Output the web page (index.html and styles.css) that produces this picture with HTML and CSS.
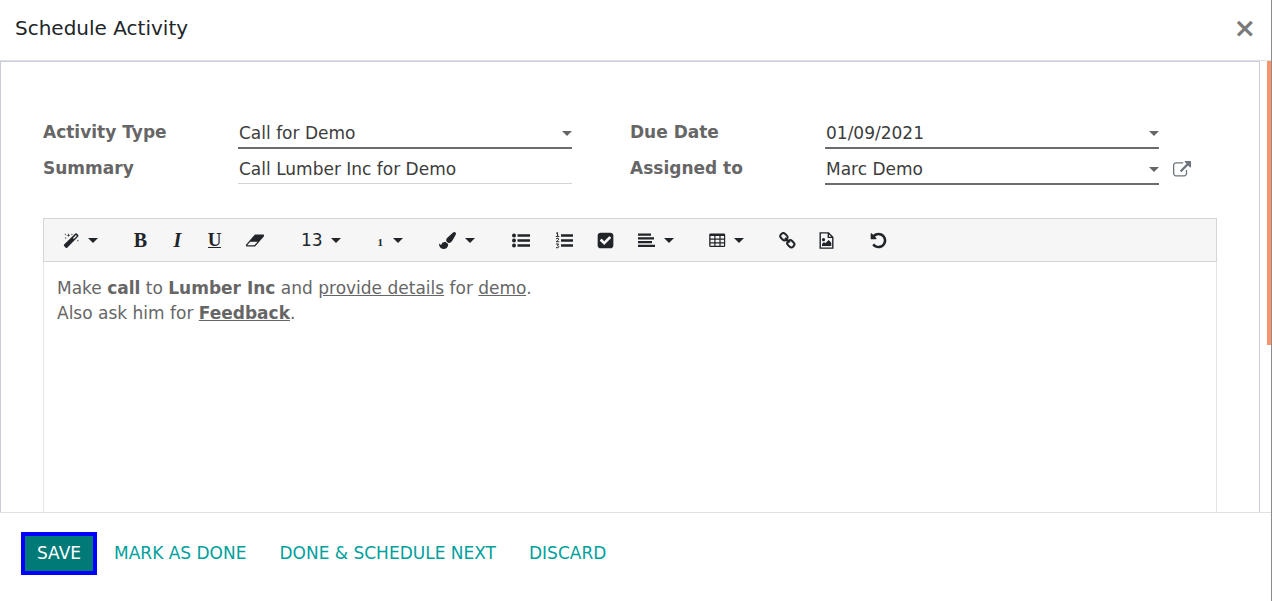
FILE: index.html
```html
<!DOCTYPE html>
<html lang="en">
<head>
<meta charset="utf-8">
<title>Schedule Activity</title>
<link rel="stylesheet" href="styles.css">
</head>
<body>
<svg class="defs" aria-hidden="true">
  <symbol id="caret" viewBox="0 0 10 5"><path d="M0 0h10L5 5z"/></symbol>
</svg>
<div class="dialog" role="dialog" aria-labelledby="title">
  <header class="header">
    <h1 class="title" id="title">Schedule Activity</h1>
    <button class="close" type="button" aria-label="Close">×</button>
  </header>
  <main class="body">
    <div class="sheet">
      <form class="fields">
        <label class="label" for="type">Activity Type</label>
        <div class="field">
          <select class="control strong" id="type"><option>Call for Demo</option></select>
          <svg class="caret field-caret"><use href="#caret"/></svg>
        </div>
        <label class="label" for="due">Due Date</label>
        <div class="field">
          <input class="control strong" id="due" type="text" value="01/09/2021">
          <svg class="caret field-caret"><use href="#caret"/></svg>
        </div>
        <label class="label" for="summary">Summary</label>
        <div class="field">
          <input class="control" id="summary" type="text" value="Call Lumber Inc for Demo">
        </div>
        <label class="label" for="assigned">Assigned to</label>
        <div class="field">
          <select class="control strong" id="assigned"><option>Marc Demo</option></select>
          <svg class="caret field-caret"><use href="#caret"/></svg>
          <button class="external" type="button" aria-label="External link">
            <svg viewBox="0 0 1792 1792"><path d="M1408 928v320q0 119-84.500 203.500t-203.500 84.500h-832q-119 0-203.500-84.500t-84.500-203.500v-832q0-119 84.500-203.500t203.500-84.500h704q14 0 23 9t9 23v64q0 14-9 23t-23 9h-704q-66 0-113 47t-47 113v832q0 66 47 113t113 47h832q66 0 113-47t47-113v-320q0-14 9-23t23-9h64q14 0 23 9t9 23zm384-864v512q0 26-19 45t-45 19-45-19l-176-176-652 652q-10 10-23 10t-23-10l-114-114q-10-10-10-23t10-23l652-652-176-176q-19-19-19-45t19-45 45-19h512q26 0 45 19t19 45z"/></svg>
          </button>
        </div>
      </form>
      <section class="editor">
        <div class="toolbar" role="toolbar">
          <div class="group">
            <button class="tool" type="button" aria-label="Style">
              <svg class="icon w17" viewBox="0 0 17 16"><path fill-rule="evenodd" d="M12.300 1q.8-.7 1.500 0l1.400 1.400q.7.700 0 1.500L4.200 15.200q-.8.700-1.500 0L1.100 13.600q-.7-.7 0-1.500zM13 2.500 10 5.500l.9.900 3-3zM5.500.8l.4 1.500 1.500.5-1.500.5-.4 1.500-.5-1.500-1.500-.5 1.500-.5zM2.300.8l.3.800.8.2-.8.3-.3.800-.2-.8-.8-.3.800-.2zM2.800 4.500l.3.800.8.3-.8.2-.3.900-.3-.9-.8-.2.800-.3zM9 .8l.2.800.8.200-.8.300-.2.800-.3-.8-.8-.3.800-.2zM14.900 7.200l.3.800.8.300-.8.200-.3.800-.3-.8-.8-.2.800-.3z"/></svg>
              <svg class="caret"><use href="#caret"/></svg>
            </button>
          </div>
          <div class="group">
            <button class="tool glyph" type="button" aria-label="Bold"><b>B</b></button>
            <button class="tool glyph" type="button" aria-label="Italic"><i>I</i></button>
            <button class="tool glyph" type="button" aria-label="Underline"><span class="under">U</span></button>
            <button class="tool" type="button" aria-label="Remove font style">
              <svg class="icon w22" viewBox="-128 0 2304 1792"><path d="M960 1408l336-384h-768l-336 384h768zm1013-1077q15 34 9.500 71.500t-30.500 65.500l-896 1024q-38 44-96 44h-768q-38 0-69.500-20.500t-47.500-54.500q-15-34-9.500-71.500t30.500-65.500l896-1024q38-44 96-44h768q38 0 69.500 20.500t47.500 54.500z"/></svg>
            </button>
          </div>
          <div class="group">
            <button class="tool" type="button" aria-label="Font size"><span>13</span><svg class="caret"><use href="#caret"/></svg></button>
          </div>
          <div class="group">
            <button class="tool" type="button" aria-label="Heading level"><span class="level">1</span><svg class="caret"><use href="#caret"/></svg></button>
          </div>
          <div class="group">
            <button class="tool" type="button" aria-label="Color">
              <svg class="icon w19" viewBox="0 0 1792 1792"><path d="M1615 0q70 0 122.500 46.500t52.500 116.500q0 63-45 151-332 629-465 752-97 91-218 91-126 0-216.500-92.500t-90.500-219.500q0-128 92-212l638-579q59-54 130-54zm-909 1034q39 76 106.500 130t150.500 76l1 71q4 213-129.500 347t-348.500 134q-123 0-218-46.500t-152.500-127.500-86.500-183-29-220q7 5 41 30t62 44.500 59 36.500 46 17q41 0 55-37 25-66 57.500-112.500t69.500-76 88-47.500 103-25.500 125-10.500z"/></svg>
              <svg class="caret"><use href="#caret"/></svg>
            </button>
          </div>
          <div class="group">
            <button class="tool" type="button" aria-label="Unordered list">
              <svg class="icon w21" viewBox="0 0 21 17"><circle cx="4" cy="3.500" r="2"/><circle cx="4" cy="8.500" r="2"/><circle cx="4" cy="13.500" r="2"/><path d="M7.500 2.300H20v2.400H7.500zM7.500 7.300H20v2.400H7.500zM7.500 12.300H20v2.400H7.500z"/></svg>
            </button>
            <button class="tool" type="button" aria-label="Ordered list">
              <svg class="icon w21" viewBox="0 0 21 17"><path d="M8 2.300h12v2.400H8zM8 7.300h12v2.400H8zM8 12.300h12v2.400H8z"/><path class="line" d="M3 1.300 4.600.6V4M2.800 4.400h3.500M3 7q1-1.200 2.400-.6c1.200.9-.6 1.800-2.200 3.300h3M3 12h2.700L4.300 13.700c2.400.1 1.900 2.800-1.300 1.900"/></svg>
            </button>
            <button class="tool" type="button" aria-label="Checklist">
              <svg class="icon w19" viewBox="64 64 1664 1664"><path d="M813 1299l614-614q19-19 19-45t-19-45l-102-102q-19-19-45-19t-45 19l-467 467-211-211q-19-19-45-19t-45 19l-102 102q-19 19-19 45t19 45l358 358q19 19 45 19t45-19zm851-883v960q0 119-84.500 203.500t-203.500 84.500h-960q-119 0-203.500-84.500t-84.500-203.500v-960q0-119 84.500-203.500t203.500-84.500h960q119 0 203.500 84.500t84.500 203.500z"/></svg>
            </button>
            <button class="tool" type="button" aria-label="Paragraph">
              <svg class="icon w19" viewBox="0 0 19 17"><path d="M1 1.500h13v2.300H1zM1 5.200h16v2.300H1zM1 9h14v2.300H1zM1 12.700h17V15H1z"/></svg>
              <svg class="caret"><use href="#caret"/></svg>
            </button>
          </div>
          <div class="group">
            <button class="tool" type="button" aria-label="Table">
              <svg class="icon w17" viewBox="0 0 17 17"><path fill-rule="evenodd" d="M1.500 1.500h13.500q1.200 0 1.200 1.200v11q0 1.300-1.200 1.300H1.500Q.2 15 .2 13.700v-11Q.2 1.500 1.500 1.500zM1.500 4v2.600h3.800V4zM6.500 4v2.600h3.900V4zM11.600 4v2.600H15V4zM1.500 7.800v2.500h3.800V7.800zM6.500 7.800v2.500h3.900V7.800zM11.600 7.800v2.500H15V7.800zM1.500 11.500v2.300h3.800v-2.300zM6.500 11.500v2.300h3.900v-2.300zM11.600 11.500v2.300H15v-2.300z"/></svg>
              <svg class="caret"><use href="#caret"/></svg>
            </button>
          </div>
          <div class="group">
            <button class="tool" type="button" aria-label="Link">
              <svg class="icon w17" viewBox="0 0 17 17"><g class="ring"><rect x="1.200" y="1.800" width="7.400" height="5.800" rx="2.700" transform="rotate(45 4.900 4.700)"/><rect x="8.100" y="8.900" width="7.400" height="5.800" rx="2.700" transform="rotate(45 11.800 11.800)"/><path d="m6 6 4.600 4.600"/></g></svg>
            </button>
            <button class="tool" type="button" aria-label="Picture">
              <svg class="icon w17" viewBox="0 0 17 17"><path class="page" d="M2.200.9h8.300l4.300 4.300v10.900H2.200zM10.300.9v4.500h4.500"/><circle cx="5.500" cy="7.700" r="1.600"/><path d="M4 14v-2l2-2 1.300 1.300L10.700 8l2.600 2.800V14z"/></svg>
            </button>
          </div>
          <div class="group">
            <button class="tool" type="button" aria-label="Undo">
              <svg class="icon w17" viewBox="64 64 1664 1664"><path d="M1664 896q0 156-61 298t-164 245-245 164-298 61q-172 0-327-72.500t-264-204.500q-7-10-6.500-22.500t8.500-20.500l137-138q10-9 25-9 16 2 23 12 73 95 179 147t225 52q104 0 198.500-40.500t163.500-109.500 109.500-163.500 40.500-198.500-40.500-198.500-109.500-163.500-163.500-109.500-198.500-40.500q-98 0-188 35.500t-160 101.500l137 138q31 30 14 69-17 40-59 40h-448q-26 0-45-19t-19-45v-448q0-42 40-59 39-17 69 14l130 129q107-101 244.500-156.500t284.500-55.500q156 0 298 61t245 164 164 245 61 298z"/></svg>
            </button>
          </div>
        </div>
        <div class="note" contenteditable="true" role="textbox" aria-label="Note" spellcheck="false">Make <b>call</b> to <b>Lumber Inc</b> and <u>provide details</u> for <u>demo</u>.<br>Also ask him for <b><u>Feedback</u></b>.</div>
      </section>
    </div>
    <div class="track"><div class="thumb"></div></div>
  </main>
  <footer class="footer">
    <button class="action primary" type="button">SAVE</button>
    <button class="action" type="button">MARK AS DONE</button>
    <button class="action" type="button">DONE &amp; SCHEDULE NEXT</button>
    <button class="action" type="button">DISCARD</button>
  </footer>
</div>
</body>
</html>
```
FILE: styles.css
```css
* { box-sizing: border-box; }

body {
  margin: 0;
  background: #fff;
  color: #666;
  font: 17px/25px "DejaVu Sans", sans-serif;
}

button, input, select { font: inherit; color: inherit; }

button {
  margin: 0;
  padding: 0;
  border: 0;
  background: none;
  cursor: pointer;
}

svg { display: block; fill: currentColor; }

.defs { position: absolute; width: 0; height: 0; }

.dialog {
  display: flex;
  flex-direction: column;
  height: 100vh;
  border-right: 1px solid #8c8c8c;
}

.header {
  display: flex;
  align-items: center;
  justify-content: space-between;
  padding: 13px 15px 17px;
  border-bottom: 1px solid #dee2e6;
}

.title {
  margin: 0;
  color: #212529;
  font-size: 20px;
  font-weight: 400;
  line-height: 30px;
}

.close {
  color: #7a7a7a;
  font-size: 27px;
  font-weight: 700;
  line-height: 26px;
}

.body {
  display: flex;
  flex: 1;
  gap: 7px;
  min-height: 0;
  overflow: hidden;
}

.sheet {
  display: flex;
  flex: 1;
  flex-direction: column;
  gap: 34px;
  padding: 56px 42px 0;
  border: solid #c9ccd8;
  border-width: 1px 1px 0;
}

.track { width: 4px; }

.thumb { height: 63%; background: #f8936b; }

.fields {
  display: grid;
  grid-template-columns: 195px 1fr 195px 1fr;
  row-gap: 6px;
}

.label { font-weight: 700; line-height: 28px; }

.field { position: relative; margin-right: 58px; height: 30px; }

.control {
  display: block;
  width: 100%;
  height: 30px;
  padding: 1px 0 0 1px;
  border: 0;
  border-bottom: 1px solid #d5d5d5;
  border-radius: 0;
  outline: 0;
  background: none;
  color: #3c3c3c;
  appearance: none;
}

.strong { height: 31px; border-bottom: 2px solid #6c6c6c; }

select.control { padding-top: 2px; }

.caret { width: 10px; height: 5px; }

.field-caret {
  position: absolute;
  top: 13px;
  right: 0;
  pointer-events: none;
}

.external {
  position: absolute;
  top: 7px;
  right: -32px;
  color: #6c757d;
}

.external svg { width: 18px; height: 18px; }

.editor {
  display: flex;
  flex: 1;
  flex-direction: column;
}

.toolbar {
  display: flex;
  flex-wrap: wrap;
  gap: 13px;
  padding: 0 8px;
  border: 1px solid #d6d6d6;
  background: #f6f6f6;
  color: #212529;
}

.group { display: flex; }

.tool {
  display: flex;
  align-items: center;
  justify-content: center;
  gap: 8px;
  height: 42px;
  padding: 0 11px;
}

.icon { height: 17px; }
.w17 { width: 17px; }
.w19 { width: 19px; }
.w21 { width: 21px; }
.w22 { width: 22px; }

.glyph {
  width: 37px;
  font-family: "Liberation Serif", serif;
  font-size: 20px;
  font-weight: 700;
}

.under {
  border-bottom: 1px solid;
  font-size: 19px;
  line-height: 15px;
}

.level {
  width: 9px;
  padding-top: 4px;
  font: 700 11px/12px "Liberation Serif", serif;
}

.line { fill: none; stroke: currentColor; stroke-width: 1; }
.page { fill: none; stroke: currentColor; stroke-width: 1.4; }
.ring { fill: none; stroke: currentColor; stroke-width: 2; }

.note {
  flex: 1;
  padding: 14px 13px;
  border: solid #e6e6e6;
  border-width: 0 1px;
  outline: 0;
}

.footer {
  display: flex;
  flex-wrap: wrap;
  gap: 9px;
  padding: 23px 25px 30px;
  border-top: 1px solid #dee2e6;
}

.action {
  height: 35px;
  padding: 0 12px;
  color: #00a09d;
}

.primary {
  background: #007a77;
  box-shadow: 0 0 0 4px #00f;
  color: #fff;
}
```
